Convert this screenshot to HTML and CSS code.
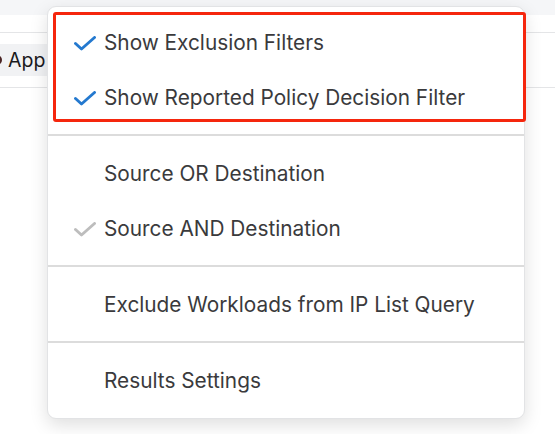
FILE: index.html
```html
<!DOCTYPE html>
<html>
<head>
<meta charset="utf-8">
<link rel="stylesheet" href="styles.css">
</head>
<body>
<div class="page">
  <div class="topband"></div>
  <div class="toolbar">
    <div class="pill">
      <svg class="pill-icon" width="12" height="12" viewBox="0 0 12 12"><circle cx="6" cy="6" r="5" fill="#4a2424"/></svg>
      <span class="pill-text">App</span>
    </div>
  </div>

  <div class="menu">
    <div class="section first">
      <div class="highlight">
        <div class="item">
          <svg class="check" width="22" height="15" viewBox="0 0 22 15"><path d="M1.5 7.5 L7.5 13 L20.5 1.5" fill="none" stroke="#2479cf" stroke-width="2.9" stroke-linecap="round" stroke-linejoin="round"/></svg>
          <span>Show Exclusion Filters</span>
        </div>
        <div class="item">
          <svg class="check" width="22" height="15" viewBox="0 0 22 15"><path d="M1.5 7.5 L7.5 13 L20.5 1.5" fill="none" stroke="#2479cf" stroke-width="2.9" stroke-linecap="round" stroke-linejoin="round"/></svg>
          <span>Show Reported Policy Decision Filter</span>
        </div>
      </div>
    </div>
    <div class="section">
      <div class="item">
        <span class="check-space"></span>
        <span>Source OR Destination</span>
      </div>
      <div class="item">
        <svg class="check" width="22" height="15" viewBox="0 0 22 15"><path d="M1.5 7.5 L7.5 13 L20.5 1.5" fill="none" stroke="#bdbdbd" stroke-width="2.9" stroke-linecap="round" stroke-linejoin="round"/></svg>
        <span>Source AND Destination</span>
      </div>
    </div>
    <div class="section">
      <div class="item">
        <span class="check-space"></span>
        <span>Exclude Workloads from IP List Query</span>
      </div>
    </div>
    <div class="section last">
      <div class="item">
        <span class="check-space"></span>
        <span>Results Settings</span>
      </div>
    </div>
  </div>
</div>
</body>
</html>
```

FILE: styles.css
```css
html, body {
  margin: 0;
  padding: 0;
  background: #ffffff;
}

.page {
  position: relative;
  width: 555px;
  height: 434px;
  overflow: hidden;
  font-family: Inter, "Noto Sans", "Liberation Sans", sans-serif;
}

.topband {
  height: 15px;
  background: #f5f6f8;
}

.toolbar {
  margin-top: 17px;
  height: 54px;
  border-top: 1px solid #e4e5e7;
  border-bottom: 1px solid #e4e5e7;
  display: flex;
  align-items: center;
}

.pill {
  margin-left: -12px;
  width: 140px;
  height: 32px;
  background: #f1f2f4;
  display: flex;
  align-items: center;
  gap: 5px;
  padding-left: 3px;
}

.pill-icon {
  flex: none;
}

.pill-text {
  font-size: 19.5px;
  color: #1a1a1c;
  line-height: 24px;
}

.menu {
  position: absolute;
  left: 47px;
  top: 6px;
  width: 476px;
  background: #ffffff;
  border: 1px solid #e2e3e5;
  border-radius: 9px;
  box-shadow: 0 6px 18px rgba(0, 0, 0, 0.13);
  display: flex;
  flex-direction: column;
}

.section {
  display: flex;
  flex-direction: column;
  gap: 31px;
  padding: 26px 0 24px 26px;
  border-top: 2px solid #dcdcdc;
}

.section.first {
  border-top: none;
  padding: 5px 0 12px 5px;
}

.section.last {
  padding-bottom: 25px;
}

.highlight {
  border: 3px solid #f5260d;
  border-radius: 3px;
  margin-right: -2px;
  padding: 16px 0 9px 18px;
  display: flex;
  flex-direction: column;
  gap: 31px;
}

.item {
  display: flex;
  align-items: center;
  gap: 8px;
  height: 24px;
  font-size: 20.8px;
  line-height: 24px;
  color: #3a3a3c;
  white-space: nowrap;
}

.check {
  flex: none;
  display: block;
}

.check-space {
  flex: none;
  width: 22px;
  height: 15px;
}
```
